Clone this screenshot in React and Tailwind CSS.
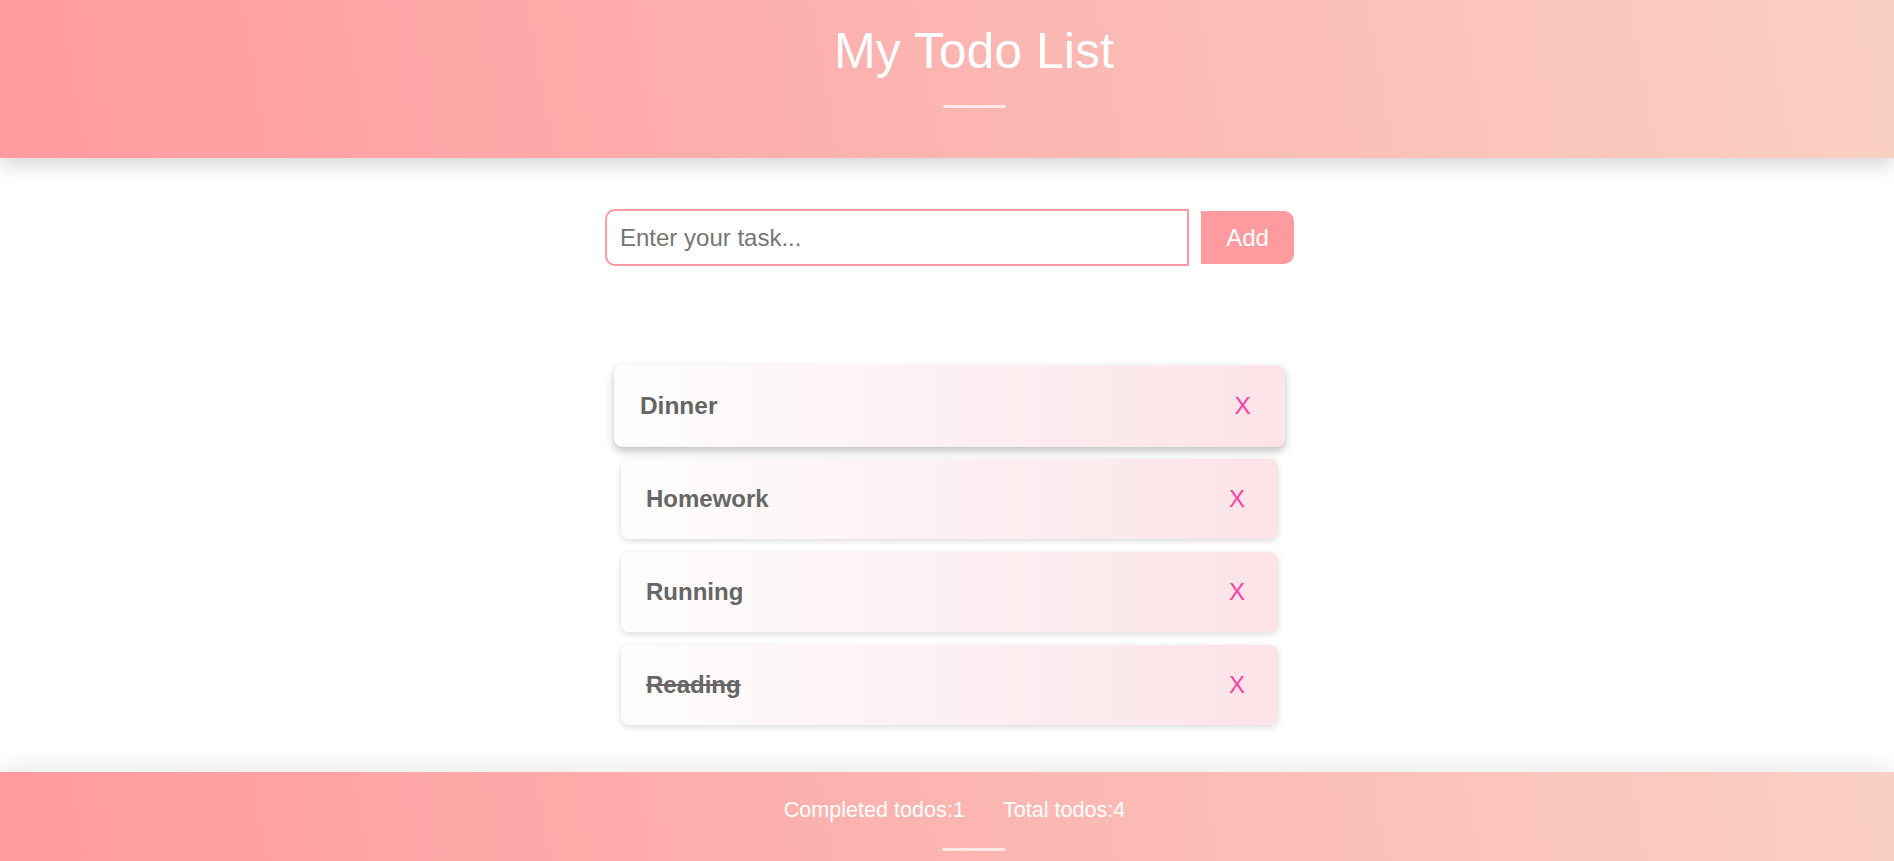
import React from "react";

const todos = [
  { text: "Dinner", done: false, hover: true },
  { text: "Homework", done: false },
  { text: "Running", done: false },
  { text: "Reading", done: true },
];

export default function App() {
  return (
    <div className="min-h-screen flex flex-col bg-white font-['Liberation_Sans',Arial,sans-serif]">
      <header className="relative z-10 h-[158px] bg-[linear-gradient(80deg,#ff9a9e,#fad0c4)] shadow-[0_6px_20px_rgba(0,0,0,0.18)] flex flex-col items-center pt-[23px] pl-[54px]">
        <h1 className="text-white text-[50px] leading-[56px] font-normal">My Todo List</h1>
        <div className="mt-[26px] h-[3px] w-[63px] rounded-full bg-white/70"></div>
      </header>

      <main className="flex-1 flex flex-col items-center pl-[5px]">
        <div className="mt-[51px] flex items-center gap-[12px]">
          <input
            type="text"
            placeholder="Enter your task..."
            className="w-[584px] h-[57px] border-2 border-[#ff9a9e] rounded-l-[10px] px-[13px] text-[24px] text-[#333] placeholder:text-[#757575] outline-none bg-white"
          />
          <button className="w-[93px] h-[53px] bg-[#ff9a9e] text-white text-[24px] rounded-r-[10px]">
            Add
          </button>
        </div>

        <ul className="mt-[100px] flex flex-col gap-[13px] w-[657px]">
          {todos.map((t) => (
            <li
              key={t.text}
              className={
                t.hover
                  ? "h-[80px] flex items-center justify-between pl-[25px] pr-[25px] rounded-[8px] bg-[linear-gradient(to_right,#fefdfd,#fce3e7)] shadow-[0_4px_8px_rgba(0,0,0,0.25)] scale-[1.02]"
                  : "h-[80px] flex items-center justify-between pl-[25px] pr-[25px] rounded-[8px] bg-[linear-gradient(to_right,#fefdfd,#fce3e7)] shadow-[0_2px_6px_rgba(0,0,0,0.15)]"
              }
            >
              <span
                className={
                  t.done
                    ? "text-[24px] font-bold text-[#666] line-through"
                    : "text-[24px] font-bold text-[#666]"
                }
              >
                {t.text}
              </span>
              <span className="text-[24px] text-[#f93ea6] mr-[8px]">X</span>
            </li>
          ))}
        </ul>
      </main>

      <footer className="relative z-10 mt-[47px] h-[89px] bg-[linear-gradient(80deg,#ff9a9e,#fad0c4)] shadow-[0_-6px_20px_rgba(0,0,0,0.08)] flex flex-col items-center pt-[25px] pl-[53px]">
        <div className="flex text-white text-[21.6px] leading-[26px]">
          <span className="mr-[38px]">Completed todos:1</span>
          <span className="mr-[38px]">Total todos:4</span>
        </div>
        <div className="mt-[25px] h-[3px] w-[63px] rounded-full bg-white/70"></div>
      </footer>
    </div>
  );
}
